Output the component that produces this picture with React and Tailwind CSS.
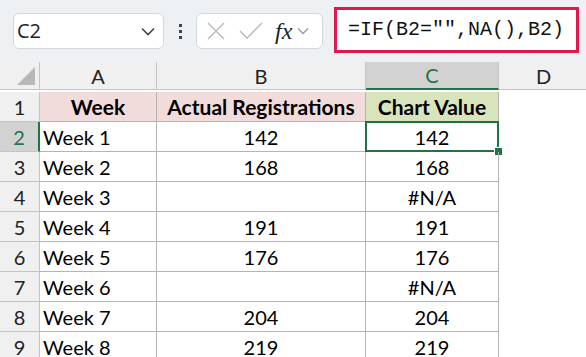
import React from 'react';

const rows = [
  ['Week 1', '142', '142'],
  ['Week 2', '168', '168'],
  ['Week 3', '', '#N/A'],
  ['Week 4', '191', '191'],
  ['Week 5', '176', '176'],
  ['Week 6', '', '#N/A'],
  ['Week 7', '204', '204'],
  ['Week 8', '219', '219'],
];

const cellFont = { fontFamily: 'Lato, "Open Sans", sans-serif' };

function Toolbar() {
  return (
    <div className="h-[62px] bg-[#eef1f4] flex items-start" style={{ fontFamily: '"Open Sans", "Liberation Sans", sans-serif' }}>
      <div className="mt-[13px] ml-[13px] w-[151px] h-[36px] bg-white border border-[#d4d7db] rounded-[6px] flex items-center justify-between pl-[3px] pr-[8px]">
        <span className="text-[20px] text-[#222] leading-none">C2</span>
        <svg width="14" height="9" viewBox="0 0 14 9" fill="none" stroke="#444" strokeWidth="1.6">
          <path d="M1 1.5l6 6 6-6" />
        </svg>
      </div>
      <div className="mt-[24px] w-[32px] flex flex-col items-center gap-[3px]">
        <span className="w-[3px] h-[3px] bg-[#444]" />
        <span className="w-[3px] h-[3px] bg-[#444]" />
        <span className="w-[3px] h-[3px] bg-[#444]" />
      </div>
      <div className="mt-[13px] w-[127px] h-[36px] bg-white border border-[#d4d7db] rounded-[6px] flex items-center pl-[9px]">
        <svg width="20" height="20" viewBox="0 0 20 20" fill="none" stroke="#b8b8b8" strokeWidth="1.4">
          <path d="M2 2l16 16M18 2L2 18" />
        </svg>
        <svg className="ml-[13px]" width="24" height="18" viewBox="0 0 24 18" fill="none" stroke="#b8b8b8" strokeWidth="1.4">
          <path d="M1 9l7 7L23 1" />
        </svg>
        <span className="ml-[12px] text-[24px] italic text-[#222] leading-none" style={{ fontFamily: '"Liberation Serif", serif' }}>fx</span>
        <svg className="ml-[5px]" width="12" height="8" viewBox="0 0 12 8" fill="none" stroke="#999" strokeWidth="1.3">
          <path d="M1 1.5l5 5 5-5" />
        </svg>
      </div>
      <div className="mt-[7px] ml-[11px] w-[245px] h-[46px] bg-white border-[3px] border-[#e0194a] flex items-center pl-[11px]">
        <span className="text-[20px] text-[#111] leading-none" style={{ fontFamily: '"Liberation Mono", monospace' }}>=IF(B2="",NA(),B2)</span>
      </div>
    </div>
  );
}

export default function App() {
  return (
    <div className="w-[586px] h-[357px] overflow-hidden bg-white">
      <Toolbar />
      <div className="grid grid-cols-[40px_117px_209px_133px_1fr] auto-rows-[30px]" style={cellFont}>
        {/* column headers */}
        <div className="h-[28px] bg-[#f0f0f0] border-r border-b border-[#c4c4c4] relative overflow-hidden">
          <div className="absolute right-[4px] bottom-[4px] w-0 h-0 border-l-[18px] border-l-transparent border-b-[18px] border-b-[#b8b8b8]" />
        </div>
        <div className="h-[28px] bg-[#f0f0f0] border-r border-b border-[#c4c4c4] flex items-center justify-center text-[20px] text-[#222]">A</div>
        <div className="h-[28px] bg-[#f0f0f0] border-r border-b border-[#c4c4c4] flex items-center justify-center text-[20px] text-[#222]">B</div>
        <div className="h-[28px] bg-[#d2d2d2] border-r border-[#c4c4c4] border-b-2 border-b-[#217346] flex items-center justify-center text-[20px] text-[#217346]">C</div>
        <div className="h-[28px] bg-[#f0f0f0] border-b border-[#c4c4c4] flex items-center pl-[37px] text-[20px] text-[#222]">D</div>

        {/* row 1 */}
        <div className="bg-[#f0f0f0] border-r border-b border-[#c4c4c4] flex items-center justify-center text-[20px] text-[#222]">1</div>
        <div className="bg-[#f2dcdb] border-r border-b border-[#b4b4b4] flex items-center justify-center text-[21px] font-bold text-black">Week</div>
        <div className="bg-[#f2dcdb] border-r border-b border-[#b4b4b4] flex items-center justify-center text-[21px] font-bold text-black">Actual Registrations</div>
        <div className="bg-[#d8e4bc] border-r border-b border-[#b4b4b4] flex items-center justify-center text-[21px] font-bold text-black">Chart Value</div>
        <div />

        {rows.map((r, i) => {
          const sel = i === 0;
          return (
            <React.Fragment key={i}>
              <div className={sel
                ? 'bg-[#d2d2d2] border-r-2 border-r-[#217346] border-b border-b-[#c4c4c4] flex items-center justify-center text-[20px] text-[#217346]'
                : 'bg-[#f0f0f0] border-r border-b border-[#c4c4c4] flex items-center justify-center text-[20px] text-[#222]'}>
                {i + 2}
              </div>
              <div className="border-r border-b border-[#b4b4b4] flex items-center pl-[3px] text-[20px] text-black">{r[0]}</div>
              <div className="border-r border-b border-[#b4b4b4] flex items-center justify-center text-[20px] text-black">{r[1]}</div>
              <div className="relative border-r border-b border-[#b4b4b4] flex items-center justify-center text-[20px] text-black">
                {r[2]}
                {sel && (
                  <>
                    <div className="absolute -left-px -top-px -right-px -bottom-px border-2 border-[#217346]" />
                    <div className="absolute -right-[5px] -bottom-[5px] w-[9px] h-[9px] bg-[#217346] border border-white" />
                  </>
                )}
              </div>
              <div />
            </React.Fragment>
          );
        })}
      </div>
    </div>
  );
}
